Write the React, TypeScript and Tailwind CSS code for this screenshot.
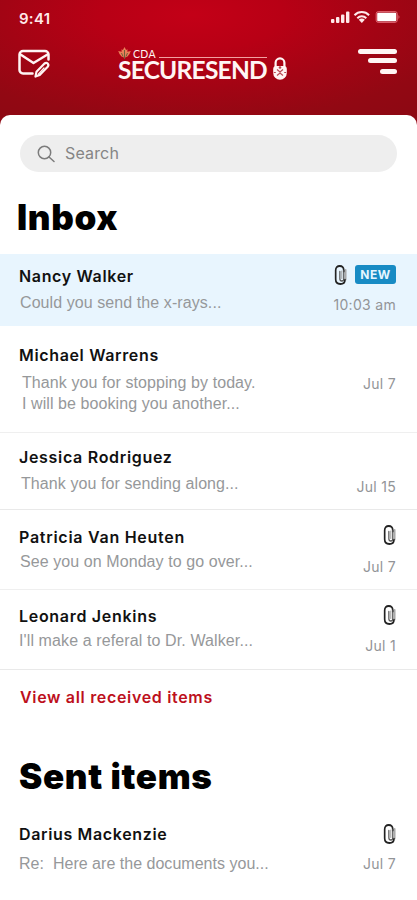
import React from 'react';

const INTER = "font-['Inter','Liberation_Sans',sans-serif]";
const SANS = "font-['Liberation_Sans',Arial,sans-serif]";

type Message = {
  name: string;
  nameClass: string;
  lines: { text: string; className: string }[];
  date: string;
  dateClass: string;
  rowClass: string;
  clip?: string;
  isNew?: boolean;
};

const inbox: Message[] = [
  {
    name: 'Nancy Walker',
    nameClass: 'tracking-[0.65px]',
    lines: [{ text: 'Could you send the x-rays...', className: 'mt-[7px] ml-px tracking-[0.08px]' }],
    date: '10:03 am',
    dateClass: 'mt-[9px]',
    rowClass: 'h-[72px] bg-[#e8f5fe] pt-3',
    clip: '-mt-px',
    isNew: true,
  },
  {
    name: 'Michael Warrens',
    nameClass: 'tracking-[0.65px]',
    lines: [
      { text: 'Thank you for stopping by today.', className: 'mt-[8px] ml-[3px] tracking-[0.08px]' },
      { text: 'I will be booking you another...', className: 'mt-px ml-[3px] tracking-[0.08px]' },
    ],
    date: 'Jul 7',
    dateClass: 'mt-[9px]',
    rowClass: 'h-[107px] border-b border-[#efefef] pt-[19px]',
  },
  {
    name: 'Jessica Rodriguez',
    nameClass: 'tracking-[0.69px]',
    lines: [{ text: 'Thank you for sending along...', className: 'mt-[7px] ml-[2px] tracking-[0.08px]' }],
    date: 'Jul 15',
    dateClass: 'mt-[10px]',
    rowClass: 'h-[77px] border-b border-[#e9e9e9] pt-[14px]',
  },
  {
    name: 'Patricia Van Heuten',
    nameClass: 'tracking-[0.73px]',
    lines: [{ text: 'See you on Monday to go over...', className: 'mt-[5px] ml-px tracking-[0.08px]' }],
    date: 'Jul 7',
    dateClass: 'mt-[10px]',
    rowClass: 'h-[80px] border-b border-[#efefef] pt-[17px]',
    clip: '-mt-[2px]',
  },
  {
    name: 'Leonard Jenkins',
    nameClass: 'tracking-[0.7px]',
    lines: [{ text: "I'll make a referal to Dr. Walker...", className: 'mt-[5px] tracking-[0.11px]' }],
    date: 'Jul 1',
    dateClass: 'mt-[10px]',
    rowClass: 'h-[80px] border-b border-[#e9e9e9] pt-[16px]',
    clip: '-mt-px',
  },
];

const sent: Message = {
  name: 'Darius Mackenzie',
  nameClass: 'tracking-[0.65px]',
  lines: [{ text: 'Re:  Here are the documents you...', className: 'mt-[10px] tracking-[0.02px]' }],
  date: 'Jul 7',
  dateClass: 'mt-[10px]',
  rowClass: 'h-[76px]',
  clip: '',
};

function Clip() {
  return (
    <svg width="13" height="20" viewBox="0 0 14 20" preserveAspectRatio="none" fill="none" strokeLinecap="round">
      <path d="M12.5 5v9.5" stroke="#aaa" strokeWidth="2" />
      <path d="M10.5 6.5V5.2C10.5 2.6 9 1 6.2 1S1.8 2.7 1.8 5.3v9C1.8 17.3 3.6 19 6.8 19s5-1.6 5-4.3" stroke="#222" strokeWidth="1.8" />
      <path d="M10.5 5.5v8.2c0 1.6-.7 2.3-2 2.3s-2.2-.8-2.2-2.3V6.4" stroke="#555" strokeWidth="1.3" />
      <path d="M8.4 6v7.5" stroke="#999" strokeWidth="1" />
    </svg>
  );
}

function Row({ m }: { m: Message }) {
  return (
    <div className={`flex justify-between pl-[19px] pr-[21px] ${m.rowClass}`}>
      <div className="whitespace-pre">
        <div className={`${INTER} h-5 text-base leading-5 font-semibold text-[#111] ${m.nameClass}`}>{m.name}</div>
        {m.lines.map((l) => (
          <div key={l.text} className={`${SANS} h-5 text-base leading-5 text-[#96989a] ${l.className}`}>
            {l.text}
          </div>
        ))}
      </div>
      <div className="flex flex-col items-end whitespace-pre">
        <div className="flex h-5 items-start gap-2">
          {m.clip !== undefined && (
            <div className={m.clip}>
              <Clip />
            </div>
          )}
          {m.isNew && (
            <span className={`${INTER} -mt-px flex h-[19px] w-[41px] items-center justify-center rounded-[3px] bg-[#188bc4] text-xs font-bold tracking-[0.5px] text-[#e6f6ff]`}>
              NEW
            </span>
          )}
        </div>
        <div className={`${INTER} h-5 text-sm leading-5 tracking-[0.3px] text-[#929497] ${m.dateClass}`}>{m.date}</div>
      </div>
    </div>
  );
}

function StatusIcons() {
  return (
    <svg width="70" height="14" viewBox="0 0 70 14" fill="#ffe9ea">
      <rect x="1" y="9" width="3.4" height="4" rx="1" />
      <rect x="6" y="7" width="3.4" height="6" rx="1" />
      <rect x="11" y="4.500" width="3.4" height="8.500" rx="1" />
      <rect x="16" y="1.500" width="3.4" height="11.500" rx="1" />
      <g fill="none" stroke="#ffe9ea" strokeWidth="2">
        <path d="M24.500 5.200a10 10 0 0 1 14.600 0" />
        <path d="M27.300 8.200a6.300 6.300 0 0 1 9 0" />
      </g>
      <path d="M28.800 9.800a4.200 4.200 0 0 1 6 0L31.800 13z" />
      <rect x="46.200" y="1.700" width="21" height="10.600" rx="2" fill="none" stroke="#e8707c" strokeWidth="1" />
      <rect x="47.200" y="2.700" width="19" height="8.600" rx="1" fill="#fff" />
      <path d="M68.500 5v4q1.800-2 0-4" fill="#e8707c" />
    </svg>
  );
}

function Compose() {
  return (
    <svg width="34" height="30" viewBox="0 0 34 30" fill="none" stroke="#fff5f4" strokeWidth="2.500" strokeLinejoin="round" strokeLinecap="round">
      <path d="M15.500 24.500H6A3.500 3.500 0 0 1 2.500 21V5.500A3.500 3.500 0 0 1 6 2h22a3.500 3.500 0 0 1 3.500 3.500v5" />
      <path d="M3.500 5.500l13 8.500L30.500 5.500" />
      <path d="M18.500 27.500l1-4.800 8-8.200q1.800-1.300 3.200 0 1.400 1.600 0 3.200l-8 8.200z" strokeWidth="2.200" />
      <path d="M21.500 25l5.500-6" strokeWidth="1.200" />
    </svg>
  );
}

function Logo() {
  return (
    <div className="flex h-9 w-[172px] items-start text-[#fff5f4]">
      <div className="w-[152px]">
        <div className="flex h-[12px] items-center">
          <svg width="13" height="12" viewBox="0 0 13 12">
            <path d="M6.500 0l1.600 3 1.400-.8-.2 2.600L12.800 4l-1.300 3-2 2.500-3 1.300-3-1.300-2-2.500L.2 4l3.500.8-.2-2.600 1.400.8z" fill="#e98058" />
            <path d="M6.500 3v9M3.500 6l1.500 3.500M9.500 6L8 9.500" stroke="#71603d" strokeWidth="1" fill="none" />
          </svg>
          <span className="mt-[1px] ml-[2px] w-[26px] font-['Lato',sans-serif] text-[10.500px] leading-3 tracking-[0.3px]">CDA</span>
          <span className="mt-[8px] h-px w-[108px] bg-[#f3a0a1]" />
        </div>
        <div className="h-[22px] whitespace-nowrap font-['Lato',sans-serif] text-[24.500px] leading-[22px] font-bold tracking-[-0.75px]">SECURESEND</div>
      </div>
      <svg className="mt-[10px] ml-[2px]" width="16" height="24" viewBox="0 0 16 24" fill="none">
        <path d="M3.600 10V5.800a4.400 4.400 0 0 1 8.800 0V10" stroke="#fff5f4" strokeWidth="2.200" />
        <path d="M1.200 12q0-3 3-3h7.600q3 0 3 3v4a6.800 6.800 0 0 1-13.600 0z" fill="#fff5f4" />
        <path d="M5 12.500l3 2.500 3-2.500M5 18.500l3-2.500 3 2.500M1.800 15.500h2M12.200 15.500h2" stroke="#b94a54" strokeWidth="1.200" />
        <circle cx="8" cy="10.500" r="1.300" fill="#b94a54" />
      </svg>
    </div>
  );
}

export default function App() {
  return (
    <div className="h-[900px] w-[417px] overflow-hidden bg-white">
      <header className="h-[125px] bg-[radial-gradient(ellipse_78%_100%_at_46%_12%,#c30017_0%,#b80015_28%,#a30414_58%,#920813_85%,#8e0813_100%)]">
        <div className="flex h-[36px] items-start justify-between pl-[19px] pr-[17px]">
          <span className={`${INTER} mt-[9px] text-[15px] leading-5 font-semibold tracking-[0.25px] text-[#ffe9ea]`}>9:41</span>
          <div className="mt-[10px]">
            <StatusIcons />
          </div>
        </div>
        <div className="flex items-start pl-[17px] pr-[20px]">
          <div className="mt-[13px]">
            <Compose />
          </div>
          <div className="mt-[11px] ml-[67px]">
            <Logo />
          </div>
          <div className="mt-[13px] ml-auto flex w-[39px] flex-col items-end">
            <span className="h-[5px] w-[39px] rounded-full bg-[#fff5f4]" />
            <span className="mt-[4px] h-[5px] w-[29px] rounded-full bg-[#fff5f4]" />
            <span className="mt-[6px] h-[5px] w-[17px] rounded-full bg-[#fff5f4]" />
          </div>
        </div>
      </header>
      <main className="relative -mt-[10px] h-[785px] rounded-t-[10px] bg-white">
        <div className="pt-[20px] pl-[20px]">
          <div className="flex h-[37px] w-[377px] items-center rounded-full bg-[#eee] pl-[17px]">
            <svg width="18" height="18" viewBox="0 0 18 18" fill="none" stroke="#7c7c7c" strokeWidth="1.500" strokeLinecap="round">
              <circle cx="7.500" cy="7.500" r="6.200" />
              <path d="M12 12l5 4.500" />
            </svg>
            <span className={`${INTER} -mt-px ml-[10px] text-base leading-5 tracking-[0.15px] text-[#858585]`}>Search</span>
          </div>
        </div>
        <h1 className={`${INTER} mt-[25px] ml-[17px] h-10 text-[35px] leading-10 font-black tracking-[0.65px] text-black`}>Inbox</h1>
        <div className="mt-[17px]">
          {inbox.map((m) => (
            <Row key={m.name} m={m} />
          ))}
        </div>
        <a className={`${INTER} mt-[17px] ml-5 block h-5 text-base leading-5 font-semibold tracking-[0.67px] text-[#bd101c]`}>View all received items</a>
        <h1 className={`${INTER} mt-[49px] ml-[19px] h-10 text-[35px] leading-10 font-black tracking-[0.65px] text-black`}>Sent items</h1>
        <div className="mt-[28px]">
          <Row m={sent} />
        </div>
      </main>
    </div>
  );
}
